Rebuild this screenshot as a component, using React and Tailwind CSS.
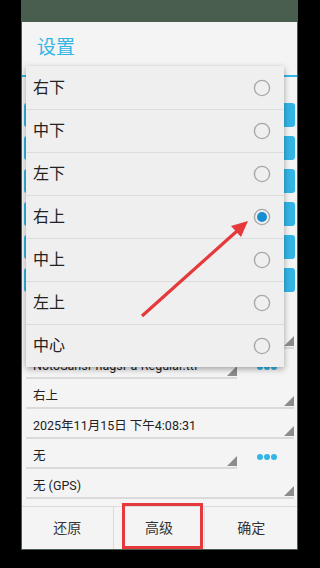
import React from "react";

const positions = ["右下", "中下", "左下", "右上", "中上", "左上", "中心"];

// small grey corner triangle of a spinner
function Corner() {
  return (
    <svg width="10" height="10" viewBox="0 0 10 10" className="self-end mb-[1px] shrink-0">
      <polygon points="10,0 10,10 0,10" fill="#8c8c8c" />
    </svg>
  );
}

function Dots() {
  return (
    <div className="w-[57px] flex justify-center items-center gap-[1px] pt-[6px] pl-[2px]">
      <span className="w-[6px] h-[6px] rounded-full bg-[#33b5e5]" />
      <span className="w-[6px] h-[6px] rounded-full bg-[#33b5e5]" />
      <span className="w-[6px] h-[6px] rounded-full bg-[#33b5e5]" />
    </div>
  );
}

function SpinnerRow({ text, dots }) {
  return (
    <div className="h-[30px] flex pl-[4px] pr-[3px]">
      <div className="flex-1 flex items-end justify-between border-b-2 border-[#dadada] pl-[7px]">
        <span className="text-[12.5px] leading-[16px] mb-[3px] text-[#222] whitespace-nowrap">{text}</span>
        <Corner />
      </div>
      {dots && <Dots />}
    </div>
  );
}

function Radio({ checked }) {
  return (
    <svg width="18" height="18" viewBox="0 0 18 18">
      <circle cx="9" cy="9" r="7.6" fill="none" stroke="#a8a8a8" strokeWidth="1.4" />
      {checked && <circle cx="9" cy="9" r="5" fill="#168ed0" />}
    </svg>
  );
}

export default function App() {
  return (
    <div className="w-[320px] h-[568px] bg-black pl-[21px] font-['Roboto','Noto_Sans_CJK_SC',sans-serif]">
      <div className="w-[277px] h-[550px] bg-[#4a5e4f] pt-[22px] px-[1px]">
        <div className="relative h-[527px] bg-[#f4f4f4] flex flex-col">
          {/* title */}
          <div className="h-[53px] flex items-center pl-[15px]">
            <span className="text-[19px] text-[#33b5e5]">设置</span>
          </div>
          <div className="h-[2px] bg-[#33b5e5]" />

          {/* buttons behind the popup */}
          <div className="mt-[26px] flex flex-col gap-[9px] px-[2px]">
            {[0, 1, 2, 3, 4, 5].map((i) => (
              <div key={i} className="h-[24px] rounded-[3px] bg-[#33b5e5]" />
            ))}
          </div>

          {/* spinners */}
          <div className="mt-[27px] flex flex-col">
            <SpinnerRow text="" />
            <SpinnerRow text="NotoSansPhagsPa-Regular.ttf" dots />
            <SpinnerRow text="右上" />
            <SpinnerRow text="2025年11月15日 下午4:08:31" />
            <SpinnerRow text="无" dots />
            <SpinnerRow text="无 (GPS)" />
          </div>

          {/* bottom buttons */}
          <div className="mt-auto h-[43px] border-t border-[#dcdcdc] grid grid-cols-3 text-[14px] text-[#333]">
            <div className="flex items-center justify-center border-r border-[#dcdcdc]">还原</div>
            <div className="flex items-center justify-center border-r border-[#dcdcdc]">高级</div>
            <div className="flex items-center justify-center">确定</div>
          </div>

          {/* popup menu */}
          <div className="absolute left-[4px] top-[44px] w-[258px] bg-[#efefef] shadow-[0_2px_6px_rgba(0,0,0,0.35)]">
            {positions.map((p, i) => (
              <div
                key={p}
                className={
                  "h-[43px] flex items-center justify-between pl-[7px] pr-[13px] " +
                  (i > 0 ? "border-t border-[#dcdcdc]" : "")
                }
              >
                <span className="text-[16px] text-[#222]">{p}</span>
                <Radio checked={p === "右上"} />
              </div>
            ))}
          </div>
        </div>
      </div>

      {/* annotations */}
      <div className="absolute left-[122px] top-[503px] w-[81px] h-[46px] border-[3px] border-[#e5393b]" />
      <svg className="absolute left-0 top-0" width="320" height="568" viewBox="0 0 320 568">
        <line x1="142" y1="316" x2="237" y2="231" stroke="#e5393b" strokeWidth="3.2" />
        <polygon points="248,221 231,226 241,237" fill="#e5393b" />
      </svg>
    </div>
  );
}
